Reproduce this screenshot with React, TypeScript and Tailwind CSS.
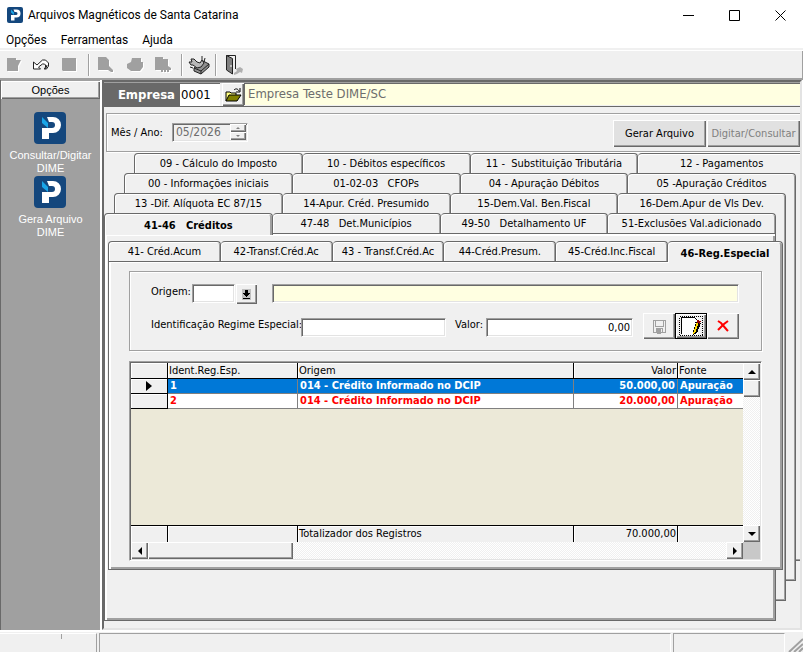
import { useState } from 'react';
import type { ReactNode } from 'react';
import { clsx } from 'clsx';

const bevel = 'shadow-[inset_1px_1px_0_#ffffff,inset_-1px_-1px_0_#696969,inset_-2px_-2px_0_#a0a0a0]';
const raised = 'bg-[#f0f0f0] ' + bevel;
const sunken =
  'border border-t-[#a0a0a0] border-l-[#a0a0a0] border-r-white border-b-white shadow-[inset_1px_1px_0_#696969,inset_-1px_-1px_0_#e3e3e3]';
const groupBox = 'border border-[#a0a0a0] shadow-[1px_1px_0_#ffffff,inset_1px_1px_0_#ffffff]';
const scrollTrack = 'bg-[repeating-conic-gradient(#ffffff_0_25%,#f0f0f0_0_50%)] bg-[length:2px_2px]';

const AppLogo = ({ className }: { className: string }) => (
  <svg viewBox="0 0 32 32" className={className} aria-hidden="true">
    <rect width="32" height="32" rx="4" fill="#14477d" />
    <path d="M13 5h6a8 8 0 0 1 0 16h-4v6H8V16h10a3 3 0 0 0 0-6h-3z" fill="#fff" />
    <path d="M8 5l6 6v5L8 11z" fill="#19a5e8" />
  </svg>
);

const Separator = () => <div className="h-[22px] w-[2px] border-l border-r border-l-[#a0a0a0] border-r-white" />;

const ToolButton = ({ label, className, children }: { label: string; className: string; children: ReactNode }) => (
  <button type="button" aria-label={label} className={clsx('flex shrink-0 items-center justify-center', className)}>
    {children}
  </button>
);

const shadowIcon = 'h-4 w-[18px] drop-shadow-[1px_1px_0_#ffffff]';

const Toolbar = () => (
  <div className="flex h-[28px] items-center border-t border-white bg-[#f0f0f0] pl-[5px] shadow-[inset_-1px_0_0_#a0a0a0]">
    <ToolButton label="Novo" className="w-[18px]">
      <svg viewBox="0 0 18 16" className={shadowIcon}><path d="M2 1h9v2h5l-2 4-1 2v5H2z" fill="#a0a0a0" /></svg>
    </ToolButton>
    <ToolButton label="Desfazer" className="ml-[9px] w-[18px]">
      <svg viewBox="0 0 18 16" className="h-4 w-[18px]" fill="none" stroke="#222">
        <path d="M1.500 5v7h7l-2-2 4-3h2l1 1v2l-1 2h2l2-3V6l-3-3h-3L5 8z" fill="#fff" />
        <path d="M12 12l2-1 1-3" />
      </svg>
    </ToolButton>
    <ToolButton label="Gravar" className="ml-[10px] w-[18px]">
      <svg viewBox="0 0 18 16" className={shadowIcon}><path d="M2 1h14v13H3l-1-1z" fill="#a0a0a0" /></svg>
    </ToolButton>
    <div className="ml-[10px]"><Separator /></div>
    <ToolButton label="Localizar" className="ml-[7px] w-[18px]">
      <svg viewBox="0 0 18 16" className={shadowIcon}><path d="M1 0h8l3 3v6l4 4v2h-2l-3-2H1z" fill="#a0a0a0" /></svg>
    </ToolButton>
    <ToolButton label="Imprimir" className="ml-[11px] w-[18px]">
      <svg viewBox="0 0 18 16" className={shadowIcon}><path d="M6 1h9v4h2v5l-3 4H5l-4-3V7l4-2z" fill="#a0a0a0" /></svg>
    </ToolButton>
    <ToolButton label="Importar" className="ml-[10px] w-[18px]">
      <svg viewBox="0 0 18 16" className={shadowIcon}><path d="M1 0h8v2h5v7l3 2v2h-2v2h-2v-2h-1v2h-2v-2H9v2H7v-2H1z" fill="#a0a0a0" /></svg>
    </ToolButton>
    <div className="ml-[9px]"><Separator /></div>
    <ToolButton label="Transmitir" className="ml-[4px] w-[24px]">
      <svg viewBox="0 0 22 20" className="h-[20px] w-[22px]" stroke="#222">
        <path d="M6 13l9-7 6 3v3l-8 7-7-3z" fill="#909090" />
        <path d="M6 13l7 3 8-7" fill="none" />
        <path d="M13 16v3" />
        <path d="M3 4h3l3 3 3 1 2-3 2 3-3 4-4 1-4-3H3L1 7h3z" fill="#b8b8b8" />
        <path d="M14 5V1M16 7l1-4M2 12l3 1" fill="none" />
      </svg>
    </ToolButton>
    <div className="ml-[4px]"><Separator /></div>
    <ToolButton label="Sair" className="ml-[6px] w-[22px]">
      <svg viewBox="0 0 20 22" className="h-[22px] w-[20px]">
        <path d="M2.500 16V1.500h9V15" fill="#f0f0f0" stroke="#222" />
        <path d="M2.500 1.500l6 3V20l-6-4z" fill="#808080" stroke="#222" />
        <path d="M7 11v2" stroke="#fff" />
        <path d="M12 15l4-2 3 2-1 4-2-1-3 2-3 1v-2l3-2z" fill="#b0b0b0" />
      </svg>
    </ToolButton>
  </div>
);

const Sidebar = () => (
  <aside className="w-[100px] shrink-0 border-l border-[#696969] bg-[#a0a0a0] pt-px text-center font-['Liberation_Sans',Arial,sans-serif] text-[11px] leading-[13px]">
    <button type="button" className={clsx('block h-[18px] w-full', raised)}>
      Opções
    </button>
    <div className="flex flex-col items-center pt-[13px] text-white">
      <button type="button" className="flex h-16 flex-col items-center">
        <AppLogo className="mb-[5px] h-8 w-8" />
        Consultar/Digitar
        <br />
        DIME
      </button>
      <button type="button" className="flex h-16 flex-col items-center">
        <AppLogo className="mb-[5px] h-8 w-8" />
        Gera Arquivo
        <br />
        DIME
      </button>
    </div>
  </aside>
);

const Tab = ({ label, active, className }: { label: string; active?: boolean; className?: string }) => (
  <button
    type="button"
    role="tab"
    aria-selected={!!active}
    className={clsx(
      'min-w-0 rounded-t-[4px] border-t border-r border-[#696969] bg-[#f0f0f0] whitespace-pre first:border-l',
      active
        ? 'relative h-[22px] pt-[2px] font-bold shadow-[inset_1px_1px_0_#ffffff,inset_-2px_0_0_#a0a0a0]'
        : 'h-5 pt-px shadow-[inset_1px_1px_0_#ffffff,inset_-1px_0_0_#a0a0a0]',
      className ?? 'flex-1 basis-0',
    )}
  >
    {label}
  </button>
);

const TabRow = ({ tabs, active, className }: { tabs: string[]; active?: number; className?: string }) => (
  <div role="tablist" className={clsx('flex h-5', className)}>
    {tabs.map((tab, i) => (
      <Tab key={tab} label={tab} active={i === active} />
    ))}
  </div>
);

// A row of tabs whose page sticks out to the right behind the rows in front of it
const BackLayer = ({ tabs, indent, gap, children }: { tabs: string[]; indent: string; gap: string; children: ReactNode }) => (
  <div className="flex min-w-0 flex-1 flex-col">
    <TabRow tabs={tabs} className={indent} />
    <div className="flex flex-1">
      {children}
      <div className={clsx('w-[10px] shrink-0 border-r border-b border-[#696969] shadow-[inset_-1px_-1px_0_#a0a0a0]', gap)} />
    </div>
  </div>
);

const SmallButton = ({ label, className, children }: { label: string; className?: string; children: ReactNode }) => (
  <button type="button" aria-label={label} className={clsx('flex shrink-0 items-center justify-center', raised, className)}>
    {children}
  </button>
);

const EntryForm = () => (
  <form className={clsx('flex h-20 flex-col pt-[12px] pr-[22px] pl-[21px]', groupBox)}>
    <div className="flex h-5 items-start">
      <label htmlFor="origem" className="w-[41px] leading-[15px]">Origem:</label>
      <input id="origem" className={clsx('h-[19px] w-[43px] bg-white px-1', sunken)} />
      <SmallButton label="Escolher origem" className="ml-px h-5 w-[21px]">
        <svg viewBox="0 0 9 11" className="h-[11px] w-[9px]" shapeRendering="crispEdges">
          <path d="M0 0h9v11H0z" fill="#c0c0c0" />
          <path d="M3 1h3v3h2v1L4.500 8 1 5V4h2zM1 9h7v1H1z" />
        </svg>
      </SmallButton>
      <input aria-label="Descrição da origem" readOnly className={clsx('ml-[15px] h-[19px] min-w-0 flex-1 bg-[#ffffe1] px-1', sunken)} />
    </div>
    <div className="mt-[9px] flex h-[26px] items-start">
      <label htmlFor="regime" className="mt-[5px] w-[150px] whitespace-nowrap">Identificação Regime Especial:</label>
      <input id="regime" className={clsx('mt-[5px] h-[19px] w-[145px] min-w-0 bg-white px-1', sunken)} />
      <label htmlFor="valor" className="mt-[5px] ml-[9px] w-[31px]">Valor:</label>
      <input id="valor" defaultValue="0,00" className={clsx('mt-[5px] h-[19px] min-w-0 flex-1 bg-white px-[2px] text-right', sunken)} />
      <div className="ml-[10px] flex">
        <SmallButton label="Gravar registro" className="h-[26px] w-8">
          <svg viewBox="0 0 15 15" className="h-[15px] w-[15px]" fill="none" stroke="#a0a0a0" shapeRendering="crispEdges">
            <path d="M1.500 1.500h12v12h-12zM3.500 1.500v6h8v-6M4.500 13.500v-4h6v4" />
            <path d="M5 10h3v4H5z" fill="#a0a0a0" />
          </svg>
        </SmallButton>
        <SmallButton label="Novo registro" className="h-[26px] w-8 border border-black">
          <svg viewBox="0 0 24 20" className="h-5 w-6" shapeRendering="crispEdges">
            <path d="M.5 .5h23v19H.5z" fill="none" stroke="#000" strokeDasharray="1 1" />
            <path d="M3 1h13l3 3v15H3z" fill="#fff" />
            <path d="M2.500 18V1.500h11M13.500 1.500h2l3 3v2h-3" fill="none" stroke="#000" />
            <path d="M17 6l5 1-4 10-4 2v-3z" fill="#000" />
            <path d="M18 6h2l-4 11-2 1 1-3z" fill="#ffd800" />
            <path d="M18 4l4 1-1 3-3-1z" fill="#900000" />
          </svg>
        </SmallButton>
        <SmallButton label="Excluir registro" className="h-[26px] w-8">
          <svg viewBox="0 0 12 12" className="h-3 w-3" fill="none" stroke="#f00">
            <path d="M1 1l3 2 6 7 1 1" strokeWidth="2" />
            <path d="M11 1L7 4 1 10" strokeWidth="2" />
          </svg>
        </SmallButton>
      </div>
    </div>
  </form>
);

const rows = [
  { id: '1', origem: '014 - Crédito Informado no DCIP', valor: '50.000,00', fonte: 'Apuração' },
  { id: '2', origem: '014 - Crédito Informado no DCIP', valor: '20.000,00', fonte: 'Apuração' },
];

const fixedCell = 'bg-[#f0f0f0] border-r border-black px-px font-normal shadow-[inset_1px_1px_0_#ffffff] truncate';

const RecordGrid = () => {
  const [selected, setSelected] = useState('1');

  return (
    <div className={clsx('mt-[10px] bg-[#ece9d8] p-px', sunken)}>
      <div className="flex">
        <table className="min-w-0 flex-1 table-fixed border-separate border-spacing-0 text-left leading-[14px]">
          <colgroup>
            <col className="w-[37px]" />
            <col className="w-[130px]" />
            <col />
            <col className="w-[104px]" />
            <col className="w-[65px]" />
          </colgroup>
          <thead>
            <tr className="h-4">
              <th className={clsx(fixedCell, 'border-b')} aria-label="Seleção" />
              <th className={clsx(fixedCell, 'border-b')}>Ident.Reg.Esp.</th>
              <th className={clsx(fixedCell, 'border-b')}>Origem</th>
              <th className={clsx(fixedCell, 'border-b text-right')}>Valor</th>
              <th className={clsx(fixedCell, 'border-r-0 border-b')}>Fonte</th>
            </tr>
          </thead>
          <tbody className="font-bold">
            {rows.map((row) => {
              const isSelected = row.id === selected;
              const cell = 'border-r border-b border-[#808080] px-[2px] py-0 truncate';
              return (
                <tr
                  key={row.id}
                  onClick={() => setSelected(row.id)}
                  className={clsx('h-[15px]', isSelected ? 'bg-[#0078d7] text-white' : 'bg-white text-[#ff0000]')}
                >
                  <td className={clsx(fixedCell, 'border-b py-0')}>
                    {isSelected && (
                      <svg viewBox="0 0 6 10" className="mx-auto block h-[10px] w-[6px]"><path d="M0 0l6 5-6 5z" /></svg>
                    )}
                  </td>
                  <td className={cell}>{row.id}</td>
                  <td className={cell}>{row.origem}</td>
                  <td className={clsx(cell, 'text-right')}>{row.valor}</td>
                  <td className={clsx(cell, 'border-r-0')}>{row.fonte}</td>
                </tr>
              );
            })}
            <tr>
              <td colSpan={5} className="h-[116px]" />
            </tr>
          </tbody>
          <tfoot>
            <tr className="h-[17px]">
              <td className={clsx(fixedCell, 'border-t')} />
              <td className={clsx(fixedCell, 'border-t')} />
              <td className={clsx(fixedCell, 'border-t')}>Totalizador dos Registros</td>
              <td className={clsx(fixedCell, 'border-t text-right')}>70.000,00</td>
              <td className={clsx(fixedCell, 'border-t border-r-0')} />
            </tr>
          </tfoot>
        </table>
        <div className={clsx('flex w-[17px] shrink-0 flex-col', scrollTrack)}>
          <SmallButton label="Rolar para cima" className="h-[17px]">
            <svg viewBox="0 0 8 4" className="h-1 w-2"><path d="M4 0l4 4H0z" /></svg>
          </SmallButton>
          <div className={clsx('h-[17px]', raised)} />
          <SmallButton label="Rolar para baixo" className="mt-auto h-[17px]">
            <svg viewBox="0 0 8 4" className="h-1 w-2"><path d="M0 0h8L4 4z" /></svg>
          </SmallButton>
        </div>
      </div>
      <div className={clsx('flex h-[17px]', scrollTrack)}>
        <SmallButton label="Rolar para a esquerda" className="w-[17px]">
          <svg viewBox="0 0 4 8" className="h-2 w-1"><path d="M4 0v8L0 4z" /></svg>
        </SmallButton>
        <div className={clsx('w-[145px]', raised)} />
        <SmallButton label="Rolar para a direita" className="ml-auto w-[17px]">
          <svg viewBox="0 0 4 8" className="h-2 w-1"><path d="M0 0l4 4-4 4z" /></svg>
        </SmallButton>
        <div className="w-[17px] bg-[#c8c8c8]" />
      </div>
    </div>
  );
};

const creditTabs = ['41- Créd.Acum', '42-Transf.Créd.Ac', '43 - Transf.Créd.Ac', '44-Créd.Presum.', '45-Créd.Inc.Fiscal'];

const CreditsPage = () => (
  <div className="relative -mr-[10px] mb-[46px]">
    <div role="tablist" className="flex h-5">
      {creditTabs.map((tab) => (
        <Tab key={tab} label={tab} />
      ))}
      <Tab label="46-Reg.Especial" active className="-mb-[2px] w-[115px]" />
    </div>
    <div className="border border-[#696969] bg-[#f0f0f0] px-5 pt-[9px] pb-2 shadow-[inset_2px_1px_0_#ffffff,inset_-2px_-2px_0_#a0a0a0]">
      <EntryForm />
      <RecordGrid />
    </div>
  </div>
);

const MainPanel = () => (
  <main className="flex min-w-0 flex-1 flex-col overflow-hidden border-2 border-t-[#696969] border-r-[#e3e3e3] border-b-[#e3e3e3] border-l-[#696969]">
    <div className="flex h-[25px] items-stretch border-t border-b border-t-[#a0a0a0] border-b-[#696969]">
      <label htmlFor="empresa" className="flex w-[75px] items-center justify-end bg-[#696969] pr-1 text-[13px] font-bold text-white">
        Empresa
      </label>
      <input id="empresa" defaultValue="0001" className="w-[41px] bg-white px-[2px] text-[13px] shadow-[inset_1px_1px_0_#696969]" />
      <SmallButton label="Abrir empresa" className="ml-[2px] w-[22px]">
        <svg viewBox="0 0 17 14" className="h-[14px] w-[17px]">
          <path d="M1 13V4h4l1 1h5v3" fill="#ffff80" stroke="#000" />
          <path d="M1 13l3-6h12l-4 6z" fill="#808000" stroke="#000" />
          <path d="M9 2c2-2 4-1 5 1M15 0v4h-4" fill="none" stroke="#000" />
        </svg>
      </SmallButton>
      <input
        aria-label="Nome da empresa"
        readOnly
        defaultValue="Empresa Teste DIME/SC"
        className="mb-px min-w-0 flex-1 bg-[#ffffe1] pb-px pl-[4px] text-[13px] text-[#6d6d6d] shadow-[inset_1px_1px_0_#696969]"
      />
    </div>
    <div className={clsx('mt-[6px] ml-[2px] flex h-[39px] items-center border-r-0 pt-[2px] pl-1', groupBox)}>
      <label htmlFor="mesano" className="w-[61px] pb-[2px]">Mês / Ano:</label>
      <div className={clsx('mb-[3px] flex h-[19px] w-[76px] items-center', sunken)}>
        <input id="mesano" disabled defaultValue="05/2026" className="w-[57px] pl-[3px] text-[12px] text-[#6d6d6d]" />
        <div className="flex w-[16px] flex-col">
          <SmallButton label="Próximo mês" className="h-2">
            <svg viewBox="0 0 4 2" className="h-[2px] w-1"><path d="M2 0l2 2H0z" fill="#808080" /></svg>
          </SmallButton>
          <SmallButton label="Mês anterior" className="h-2">
            <svg viewBox="0 0 4 2" className="h-[2px] w-1"><path d="M0 0h4L2 2z" fill="#808080" /></svg>
          </SmallButton>
        </div>
      </div>
      <div className="ml-auto flex gap-px text-center">
        <button type="button" className={clsx('h-[27px] w-[93px] bg-[#e1e1e1]', bevel)}>
          Gerar Arquivo
        </button>
        <button type="button" disabled className={clsx('h-[27px] w-[93px] bg-[#e1e1e1] whitespace-nowrap text-[#808080]', bevel)}>
          Digitar/Consultar
        </button>
      </div>
    </div>
    <div className="mt-px -mr-[6px] flex flex-1">
      <BackLayer tabs={['09 - Cálculo do Imposto', '10 - Débitos específicos', '11 -  Substituição Tributária', '12 - Pagamentos']} indent="pl-[30px]" gap="mb-[67px]">
        <BackLayer tabs={['00 - Informações iniciais', '01-02-03   CFOPs', '04 - Apuração Débitos', '05 -Apuração Créditos']} indent="pl-5" gap="mb-[47px]">
          <BackLayer tabs={['13 -Dif. Alíquota EC 87/15', '14-Apur. Créd. Presumido', '15-Dem.Val. Ben.Fiscal', '16-Dem.Apur de Vls Dev.']} indent="pl-[10px]" gap="mb-[27px]">
            <div className="mb-[7px] flex min-w-0 flex-1 flex-col">
              <TabRow tabs={['41-46   Créditos', '47-48   Det.Municípios', '49-50   Detalhamento UF', '51-Exclusões Val.adicionado']} active={0} />
              <div className="flex-1 border border-[#696969] pt-[7px] pr-[2px] pl-[3px] shadow-[inset_2px_2px_0_#ffffff,inset_-2px_-2px_0_#a0a0a0]">
                <CreditsPage />
              </div>
            </div>
          </BackLayer>
        </BackLayer>
      </BackLayer>
    </div>
  </main>
);

const App = () => (
  <div className="flex min-h-screen flex-col overflow-hidden bg-[#f0f0f0] font-['DejaVu_Sans_Condensed','DejaVu_Sans',sans-serif] text-[11px] leading-[14px] text-black">
    <header className="bg-white font-[Roboto,'Noto_Sans',sans-serif] text-[12px]">
      <div className="flex h-[30px] items-center pl-[7px]">
        <AppLogo className="mr-[5px] h-4 w-4" />
        <h1>Arquivos Magnéticos de Santa Catarina</h1>
        <div className="ml-auto flex">
          <button type="button" aria-label="Minimizar" className="flex h-[28px] w-[46px] items-center justify-center">
            <svg viewBox="0 0 11 11" className="h-[11px] w-[11px]"><path d="M0 5.500h11" stroke="#000" /></svg>
          </button>
          <button type="button" aria-label="Maximizar" className="flex h-[28px] w-[46px] items-center justify-center">
            <svg viewBox="0 0 11 11" className="h-[11px] w-[11px]"><path d="M.5 .5h10v10H.5z" fill="none" stroke="#000" /></svg>
          </button>
          <button type="button" aria-label="Fechar" className="flex h-[28px] w-[46px] items-center justify-center">
            <svg viewBox="0 0 11 11" className="h-[11px] w-[11px]"><path d="M.5 .5l10 10M10.500 .5l-10 10" stroke="#000" /></svg>
          </button>
        </div>
      </div>
      <nav className="flex h-[18px] items-center gap-[14px] pt-px pl-[6px]">
        <button type="button">Opções</button>
        <button type="button">Ferramentas</button>
        <button type="button">Ajuda</button>
      </nav>
    </header>
    <div className="mt-[2px] border-b-2 border-[#a0a0a0]">
      <Toolbar />
    </div>
    <div className="flex flex-1">
      <Sidebar />
      <div className="flex min-w-0 flex-1 border-r border-l-2 border-white">
        <MainPanel />
      </div>
    </div>
    <footer className="flex h-[22px] shrink-0 gap-[2px] border-t-2 border-white pt-px">
      <div className="w-[97px] border-t border-r border-t-white border-r-[#a0a0a0]">
        <div className="h-[5px] w-[62px] border-r border-[#a0a0a0]" />
      </div>
      <div className="flex-1 border border-b-0 border-[#a0a0a0] border-r-white" />
      <div className="w-[112px] border border-b-0 border-[#a0a0a0] border-r-white" />
      <svg viewBox="0 0 16 19" className="h-[19px] w-[16px]" stroke="#a0a0a0" strokeWidth="2">
        <path d="M2 19l14-13M7 19l9-8M12 19l4-4" />
      </svg>
    </footer>
  </div>
);

export default App;
